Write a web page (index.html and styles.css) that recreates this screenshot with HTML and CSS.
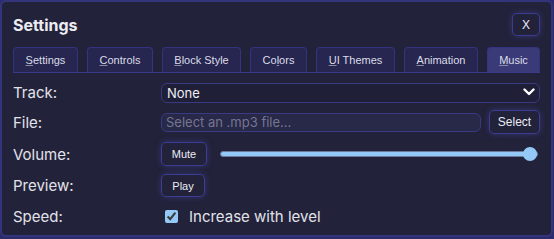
FILE: index.html
```html
<!DOCTYPE html>
<html lang="en">

<head>
    <meta charset="UTF-8">
    <meta name="viewport" content="width=device-width, initial-scale=1.0">
    <title>Settings</title>
    <link rel="stylesheet" href="styles.css">
</head>

<body>
    <div class="dialog">
        <div class="head">
            <h2 class="title">Settings</h2>
            <button class="btn close_b">X</button>
        </div>

        <div class="tabs">
            <button class="tab"><u>S</u>ettings</button>
            <button class="tab"><u>C</u>ontrols</button>
            <button class="tab"><u>B</u>lock Style</button>
            <button class="tab">Co<u>l</u>ors</button>
            <button class="tab"><u>U</u>I Themes</button>
            <button class="tab"><u>A</u>nimation</button>
            <button class="tab active"><u>M</u>usic</button>
        </div>

        <div class="form">
            <label class="lbl">Track:</label>
            <div class="sel_wrap">
                <select class="sel">
                    <option>None</option>
                </select>
                <svg class="chev" width="12" height="8" viewBox="0 0 12 8">
                    <path d="M1.5 1.5 L6 6 L10.5 1.5" fill="none" stroke="#fff" stroke-width="2.4" stroke-linecap="round" stroke-linejoin="round" />
                </svg>
            </div>

            <label class="lbl">File:</label>
            <div class="row">
                <input type="text" class="file_in" placeholder="Select an .mp3 file...">
                <button class="btn sel_b">Select</button>
            </div>

            <label class="lbl">Volume:</label>
            <div class="row">
                <button class="btn mute_b">Mute</button>
                <input type="range" class="vol" min="0" max="100" value="100">
            </div>

            <label class="lbl">Preview:</label>
            <div class="row">
                <button class="btn play_b">Play</button>
            </div>

            <label class="lbl">Speed:</label>
            <label class="chk_row">
                <input type="checkbox" class="chk" checked>
                Increase with level
            </label>
        </div>
    </div>
</body>

</html>
```

FILE: styles.css
```css
body {
    margin: 0;
    background-color: #2c2c6c;
    font-family: Inter, "Liberation Sans", sans-serif;
    color: #e6e6ee;
}

.dialog {
    box-sizing: border-box;
    width: 553px;
    height: 237px;
    border: 2px solid #34347c;
    border-radius: 6px;
    background-color: #22223a;
    padding: 0 11px;
}

.head {
    display: flex;
    justify-content: space-between;
    align-items: center;
    padding-top: 11px;
}

.title {
    margin: 0;
    font-size: 16px;
    font-weight: 700;
    color: #ececf2;
}

.btn {
    box-sizing: border-box;
    background-color: #22223a;
    border: 1px solid #3c3c92;
    border-radius: 5px;
    box-shadow: 0 0 6px rgba(90, 90, 220, 0.35);
    color: #ececf4;
    font-family: "Liberation Sans", Arial, sans-serif;
    font-size: 11px;
    padding: 0;
}

.close_b {
    width: 28px;
    height: 23px;
    font-size: 12px;
}

.tabs {
    display: flex;
    gap: 9px;
    margin-top: 11px;
    border-bottom: 1px solid #3a3a88;
}

.tab {
    box-sizing: border-box;
    height: 25px;
    padding: 0;
    white-space: nowrap;
    background-color: #262650;
    border: 1px solid #34347e;
    border-bottom: none;
    border-radius: 4px 4px 0 0;
    color: #dcdce8;
    font-family: "Liberation Sans", Arial, sans-serif;
    font-size: 11px;
}

.tab:nth-child(1) { width: 65px; }
.tab:nth-child(2) { width: 66px; }
.tab:nth-child(3) { width: 79px; }
.tab:nth-child(4) { width: 57px; }
.tab:nth-child(5) { width: 79px; }
.tab:nth-child(6) { width: 74px; }
.tab:nth-child(7) { width: 53px; }

.tab u {
    text-decoration-color: #8a8aa0;
}

.tab.active {
    background-color: #3a3a78;
}

.form {
    display: grid;
    grid-template-columns: 148px 1fr;
    grid-template-rows: 20px 24px 24px 23px 22px;
    row-gap: 8px;
    align-items: center;
    margin-top: 9px;
}

.lbl {
    font-size: 15px;
    color: #e2e2ea;
}

.sel_wrap {
    position: relative;
    height: 20px;
}

.sel {
    appearance: none;
    box-sizing: border-box;
    width: 100%;
    height: 20px;
    background-color: #1f1f38;
    border: 1px solid #3a3a82;
    border-radius: 6px;
    color: #f0f0f4;
    font-family: Inter, "Liberation Sans", sans-serif;
    font-size: 13px;
    padding: 0 5px;
}

.chev {
    position: absolute;
    right: 5px;
    top: 6px;
}

.row {
    display: flex;
    align-items: center;
}

.file_in {
    box-sizing: border-box;
    width: 320px;
    height: 19px;
    background-color: #282848;
    border: 1px solid #3a3a82;
    border-radius: 6px;
    color: #e0e0e8;
    font-family: Inter, "Liberation Sans", sans-serif;
    font-size: 13px;
    padding: 0 4px;
}

.file_in::placeholder {
    color: #767690;
}

.sel_b {
    width: 51px;
    height: 24px;
    margin-left: 8px;
    font-size: 12px;
}

.mute_b {
    width: 46px;
    height: 24px;
}

.play_b {
    width: 44px;
    height: 23px;
}

.vol {
    -webkit-appearance: none;
    appearance: none;
    width: 318px;
    height: 14px;
    margin: 0 0 0 13px;
    background: transparent;
}

.vol::-webkit-slider-runnable-track {
    height: 6px;
    background-color: #94c8f6;
    border: 1px solid #6a7a9a;
    border-radius: 4px;
}

.vol::-webkit-slider-thumb {
    -webkit-appearance: none;
    width: 14px;
    height: 14px;
    margin-top: -5px;
    border-radius: 50%;
    background-color: #94c8f6;
}

.chk_row {
    display: flex;
    align-items: center;
    font-size: 15px;
    color: #e2e2ea;
}

.chk {
    width: 13px;
    height: 13px;
    margin: 0 11px 0 4px;
    accent-color: #94c8f6;
}
```
